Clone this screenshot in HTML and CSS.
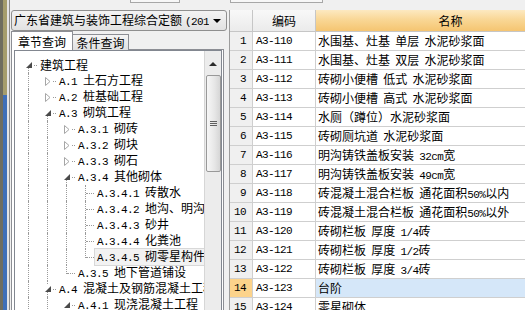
FILE: index.html
```html
<!DOCTYPE html>
<html lang="zh-CN">
<head>
<meta charset="utf-8">
<title>定额查询</title>
<link rel="stylesheet" href="styles.css">
</head>
<body>
<div class="app">
  <div class="edge"></div>
  <div class="main">
    <div class="topbar"><span class="tbbox a"></span><span class="tbbox b"></span></div>
    <div class="content">
      <div class="left">
        <div class="combo"><span class="combo-text">广东省建筑与装饰工程综合定额<span class="n">(201</span></span><span class="arrow"></span></div>
        <div class="tabs"><div class="tab active">章节查询</div><div class="tab">条件查询</div></div>
        <div class="tabpage">
          <div class="tree">
            <div class="rows">
              <div class="row"><span class="g x down"><svg class="tri" width="6" height="6" viewBox="0 0 6 6"><path d="M6 0V6H0Z" fill="#4a4a4a"/></svg></span><span class="lbl">建筑工程</span></div>
              <div class="row"><span class="g v"></span><span class="g x"><svg class="tri" width="6" height="9" viewBox="0 0 6 9"><path d="M0.5 0.5L5 4.5L0.5 8.5Z" fill="#fff" stroke="#a6a6a6"/></svg></span><span class="lbl"><span class="n">A.1 </span>土石方工程</span></div>
              <div class="row"><span class="g v"></span><span class="g x"><svg class="tri" width="6" height="9" viewBox="0 0 6 9"><path d="M0.5 0.5L5 4.5L0.5 8.5Z" fill="#fff" stroke="#a6a6a6"/></svg></span><span class="lbl"><span class="n">A.2 </span>桩基础工程</span></div>
              <div class="row"><span class="g v"></span><span class="g x down"><svg class="tri" width="6" height="6" viewBox="0 0 6 6"><path d="M6 0V6H0Z" fill="#4a4a4a"/></svg></span><span class="lbl"><span class="n">A.3 </span>砌筑工程</span></div>
              <div class="row"><span class="g v"></span><span class="g v"></span><span class="g x"><svg class="tri" width="6" height="9" viewBox="0 0 6 9"><path d="M0.5 0.5L5 4.5L0.5 8.5Z" fill="#fff" stroke="#a6a6a6"/></svg></span><span class="lbl"><span class="n">A.3.1 </span>砌砖</span></div>
              <div class="row"><span class="g v"></span><span class="g v"></span><span class="g x"><svg class="tri" width="6" height="9" viewBox="0 0 6 9"><path d="M0.5 0.5L5 4.5L0.5 8.5Z" fill="#fff" stroke="#a6a6a6"/></svg></span><span class="lbl"><span class="n">A.3.2 </span>砌块</span></div>
              <div class="row"><span class="g v"></span><span class="g v"></span><span class="g x"><svg class="tri" width="6" height="9" viewBox="0 0 6 9"><path d="M0.5 0.5L5 4.5L0.5 8.5Z" fill="#fff" stroke="#a6a6a6"/></svg></span><span class="lbl"><span class="n">A.3.3 </span>砌石</span></div>
              <div class="row"><span class="g v"></span><span class="g v"></span><span class="g x down"><svg class="tri" width="6" height="6" viewBox="0 0 6 6"><path d="M6 0V6H0Z" fill="#4a4a4a"/></svg></span><span class="lbl"><span class="n">A.3.4 </span>其他砌体</span></div>
              <div class="row"><span class="g v"></span><span class="g v"></span><span class="g v"></span><span class="g t"></span><span class="lbl"><span class="n">A.3.4.1 </span>砖散水</span></div>
              <div class="row"><span class="g v"></span><span class="g v"></span><span class="g v"></span><span class="g t"></span><span class="lbl"><span class="n">A.3.4.2 </span>地沟、明沟</span></div>
              <div class="row"><span class="g v"></span><span class="g v"></span><span class="g v"></span><span class="g t"></span><span class="lbl"><span class="n">A.3.4.3 </span>砂井</span></div>
              <div class="row"><span class="g v"></span><span class="g v"></span><span class="g v"></span><span class="g t"></span><span class="lbl"><span class="n">A.3.4.4 </span>化粪池</span></div>
              <div class="row"><span class="g v"></span><span class="g v"></span><span class="g v"></span><span class="g l"></span><span class="lbl sel"><span class="n">A.3.4.5 </span>砌零星构件</span></div>
              <div class="row"><span class="g v"></span><span class="g v"></span><span class="g l"></span><span class="lbl"><span class="n">A.3.5 </span>地下管道铺设</span></div>
              <div class="row"><span class="g v"></span><span class="g x up down"><svg class="tri" width="6" height="6" viewBox="0 0 6 6"><path d="M6 0V6H0Z" fill="#4a4a4a"/></svg></span><span class="lbl"><span class="n">A.4 </span>混凝土及钢筋混凝土工程</span></div>
              <div class="row"><span class="g v"></span><span class="g v"></span><span class="g x"><svg class="tri" width="6" height="6" viewBox="0 0 6 6"><path d="M6 0V6H0Z" fill="#4a4a4a"/></svg></span><span class="lbl"><span class="n">A.4.1 </span>现浇混凝土工程</span></div>
            </div>
            <div class="vscroll">
              <div class="sb-up"><span class="up-arrow"></span></div>
              <div class="sb-thumb"><span class="grip"></span><span class="grip"></span><span class="grip"></span></div>
            </div>
          </div>
        </div>
      </div>
      <div class="gridwrap">
        <div class="grow head">
          <div class="cell rn"></div>
          <div class="cell code">编码</div>
          <div class="cell name">名称</div>
        </div>
        <div class="grow"><div class="cell rn n">1</div><div class="cell code n">A3-110</div><div class="cell name">水围基、灶基 单层 水泥砂浆面</div></div>
        <div class="grow"><div class="cell rn n">2</div><div class="cell code n">A3-111</div><div class="cell name">水围基、灶基 双层 水泥砂浆面</div></div>
        <div class="grow"><div class="cell rn n">3</div><div class="cell code n">A3-112</div><div class="cell name">砖砌小便槽 低式 水泥砂浆面</div></div>
        <div class="grow"><div class="cell rn n">4</div><div class="cell code n">A3-113</div><div class="cell name">砖砌小便槽 高式 水泥砂浆面</div></div>
        <div class="grow"><div class="cell rn n">5</div><div class="cell code n">A3-114</div><div class="cell name">水厕（蹲位）水泥砂浆面</div></div>
        <div class="grow"><div class="cell rn n">6</div><div class="cell code n">A3-115</div><div class="cell name">砖砌厕坑道 水泥砂浆面</div></div>
        <div class="grow"><div class="cell rn n">7</div><div class="cell code n">A3-116</div><div class="cell name">明沟铸铁盖板安装 <span class="n">32cm</span>宽</div></div>
        <div class="grow"><div class="cell rn n">8</div><div class="cell code n">A3-117</div><div class="cell name">明沟铸铁盖板安装 <span class="n">49cm</span>宽</div></div>
        <div class="grow"><div class="cell rn n">9</div><div class="cell code n">A3-118</div><div class="cell name">砖混凝土混合栏板 通花面积<span class="n">50%</span>以内</div></div>
        <div class="grow"><div class="cell rn n">10</div><div class="cell code n">A3-119</div><div class="cell name">砖混凝土混合栏板 通花面积<span class="n">50%</span>以外</div></div>
        <div class="grow"><div class="cell rn n">11</div><div class="cell code n">A3-120</div><div class="cell name">砖砌栏板 厚度 <span class="n">1/4</span>砖</div></div>
        <div class="grow"><div class="cell rn n">12</div><div class="cell code n">A3-121</div><div class="cell name">砖砌栏板 厚度 <span class="n">1/2</span>砖</div></div>
        <div class="grow"><div class="cell rn n">13</div><div class="cell code n">A3-122</div><div class="cell name">砖砌栏板 厚度 <span class="n">3/4</span>砖</div></div>
        <div class="grow cur"><div class="cell rn n">14</div><div class="cell code n">A3-123</div><div class="cell name">台阶</div></div>
        <div class="grow"><div class="cell rn n">15</div><div class="cell code n">A3-124</div><div class="cell name">零星砌体</div></div>
      </div>
    </div>
  </div>
</div>
</body>
</html>
```
FILE: styles.css
```css
* { box-sizing: border-box; }
html, body { margin: 0; padding: 0; }
body {
  width: 525px;
  height: 310px;
  overflow: hidden;
  background: #f0f0f0;
  font-family: "Noto Sans CJK SC", "Liberation Sans", sans-serif;
  font-size: 12px;
  color: #000;
}
.n {
  font-family: "Liberation Mono", "Noto Sans CJK SC", monospace;
  font-size: 11px;
  letter-spacing: -0.6px;
  word-spacing: 0;
}
.app { display: flex; height: 310px; }

/* left window edge */
.edge {
  width: 10px;
  flex: none;
  background:
    linear-gradient(90deg, #6e6d5f 0 3px, transparent 3px 7px, #e4e4e4 7px 9px, #8c8c8c 9px 10px),
    linear-gradient(180deg, #a59d6c 0 95px, #3f6fb7 95px);
}

.main { flex: 1; display: flex; flex-direction: column; min-width: 0; }
.topbar { height: 10px; flex: none; display: flex; align-items: flex-start; padding-left: 120px; }
.tbbox { height: 3px; border: 1px solid #a7a7a7; border-top: none; background: #f7f7f7; }
.tbbox.a { width: 50px; }
.tbbox.b { width: 93px; margin-left: 50px; }

.content { flex: 1; display: flex; min-height: 0; }

/* left panel */
.left { width: 218px; flex: none; padding-left: 1px; display: flex; flex-direction: column; }
.combo {
  height: 21px;
  width: 216px;
  flex: none;
  border: 1px solid #8f8f8f;
  border-radius: 3px;
  background: linear-gradient(#f3f3f3, #e2e2e2);
  display: flex;
  align-items: center;
  padding-left: 2px;
  white-space: nowrap;
  overflow: hidden;
}
.combo-text { flex: 1; overflow: hidden; line-height: 18px; }
.combo-text .n { margin-left: 3px; }
.arrow {
  width: 0; height: 0;
  margin: 0 5px 0 4px;
  border-left: 4px solid transparent;
  border-right: 4px solid transparent;
  border-top: 4px solid #000;
}

.tabs { height: 19px; flex: none; display: flex; align-items: flex-end; position: relative; z-index: 1; }
.tab {
  height: 16px;
  width: 56px;
  border: 1px solid #8c8e94;
  border-left: none;
  border-bottom: none;
  background: linear-gradient(#f5f5f5, #e0e0e0);
  text-align: center;
  line-height: 15px;
}
.tab.active {
  height: 19px;
  width: 62px;
  border-left: 1px solid #8c8e94;
  background: #fff;
  line-height: 19px;
}
.tabpage {
  flex: 1;
  width: 213px;
  margin-top: -1px;
  border: 1px solid #8c8e94;
  border-bottom: none;
  background: #fff;
  padding: 0 1px 0 2px;
  min-height: 0;
}
.tree {
  height: 100%;
  border: 1px solid #828790;
  border-bottom: none;
  display: flex;
  background: #fff;
}
.rows { flex: 1; min-width: 0; padding: 6px 0 0 4px; overflow: hidden; }
.row { display: flex; height: 16px; align-items: center; white-space: nowrap; }
.lbl { margin-left: 2px; line-height: 16px; word-spacing: 2px; }
.lbl.sel {
  margin-left: -1px;
  padding: 0 40px 0 2px;
  line-height: 14px;
  background: #f2f2f2;
  border: 1px solid #d8d8d8;
}

/* tree guides */
.g { width: 19px; height: 16px; flex: none; position: relative; }
.g::before, .g::after { content: ""; position: absolute; }
.g.v::before { left: 9px; top: 0; height: 16px; border-left: 1px dotted #9a9a9a; }
.g.t::before { left: 9px; top: 0; height: 16px; border-left: 1px dotted #9a9a9a; }
.g.t::after { left: 10px; top: 8px; width: 8px; border-top: 1px dotted #9a9a9a; }
.g.l::before { left: 9px; top: 0; height: 9px; border-left: 1px dotted #9a9a9a; }
.g.l::after { left: 10px; top: 8px; width: 8px; border-top: 1px dotted #9a9a9a; }
.g.x { display: flex; align-items: center; padding-left: 7px; }
.g.x::after { left: 15px; top: 8px; width: 3px; border-top: 1px dotted #9a9a9a; }
.tri { display: block; }
.g.x.down {
  background-image: repeating-linear-gradient(180deg, #9a9a9a 0 1px, transparent 1px 2px);
  background-size: 1px 5px;
  background-position: 9px 11px;
  background-repeat: no-repeat;
}
.g.x.up.down {
  background-image: repeating-linear-gradient(180deg, #9a9a9a 0 1px, transparent 1px 2px), repeating-linear-gradient(180deg, #9a9a9a 0 1px, transparent 1px 2px);
  background-size: 1px 5px, 1px 4px;
  background-position: 9px 11px, 9px 0;
  background-repeat: no-repeat;
}

/* scrollbar */
.vscroll {
  width: 17px;
  flex: none;
  background: #ececec;
  border-left: 1px solid #d6d6d6;
  display: flex;
  flex-direction: column;
  align-items: center;
}
.sb-up { height: 24px; width: 100%; display: flex; justify-content: center; padding-top: 11px; }
.up-arrow {
  width: 0; height: 0;
  border-left: 4px solid transparent;
  border-right: 4px solid transparent;
  border-bottom: 4px solid #2b2b2b;
}
.sb-thumb {
  width: 15px;
  height: 97px;
  border: 1px solid #999;
  border-radius: 2px;
  background: linear-gradient(90deg, #f7f7f7, #e6e6e6 60%, #d6d6d6);
  display: flex;
  flex-direction: column;
  align-items: center;
  justify-content: center;
  gap: 1px;
}
.grip { width: 7px; height: 1px; background: #5f5f5f; }

/* grid */
.gridwrap {
  flex: 1;
  min-width: 0;
  margin-left: 1px;
  border-left: 1px solid #9c9c9c;
  background: #fff;
  overflow: hidden;
}
.grow {
  display: grid;
  grid-template-columns: 23px 63px 270px;
  height: 19px;
  white-space: nowrap;
}
.cell {
  border-right: 1px solid #cfcfcf;
  border-bottom: 1px solid #cfcfcf;
  line-height: 18px;
  overflow: hidden;
}
.cell.rn { text-align: right; padding-right: 6px; background: #f0f0f0; }
.cell.code { padding-left: 3px; }
.cell.name { padding-left: 2px; word-spacing: 2.6px; }
.grow.head { height: 22px; }
.head .cell {
  line-height: 21px;
  text-align: center;
  padding: 0;
  background: linear-gradient(#f8f8f8, #ebebeb);
  border-color: #c6c6c6;
}
.head .cell.name { background: linear-gradient(#fde9c1, #f9d796 45%, #f5c571); }
.grow.cur .rn { background: #fcd38b; }
.grow.cur .name { background: #d5e7f9; }
```
